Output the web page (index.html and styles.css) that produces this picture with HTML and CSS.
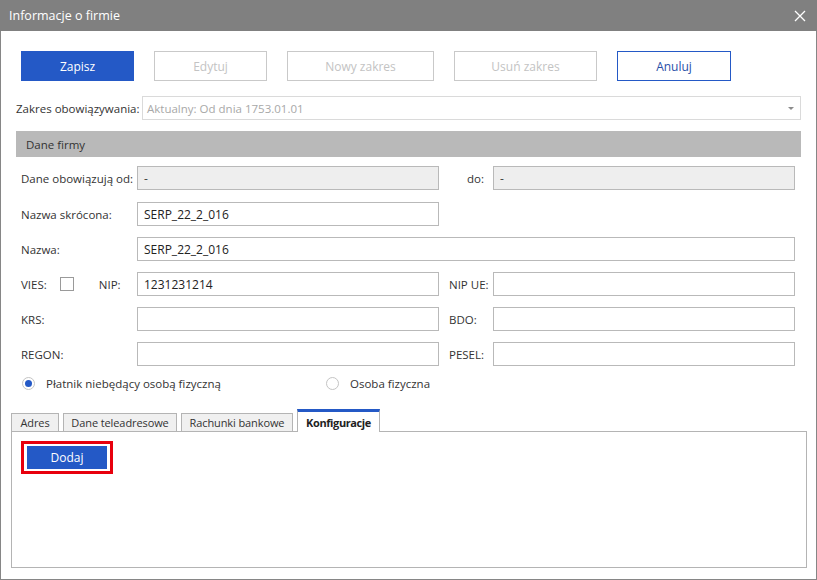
FILE: index.html
```html
<!DOCTYPE html>
<html lang="pl">
<head>
<meta charset="utf-8">
<title>Informacje o firmie</title>
<link rel="stylesheet" href="styles.css">
</head>
<body>
<div class="window">
  <div class="titlebar">
    <span class="title">Informacje o firmie</span>
    <svg class="close" width="12" height="12" viewBox="0 0 12 12"><path d="M1 1 L11 11 M11 1 L1 11" stroke="#fff" stroke-width="1.3" fill="none"/></svg>
  </div>

  <div class="toolbar">
    <div class="btn btn-primary btn-w113">Zapisz</div>
    <div class="btn btn-disabled btn-w113">Edytuj</div>
    <div class="btn btn-disabled btn-w147">Nowy zakres</div>
    <div class="btn btn-disabled btn-w143">Usuń zakres</div>
    <div class="btn btn-outline btn-w114">Anuluj</div>
  </div>

  <div class="range-row">
    <span class="range-label">Zakres obowiązywania:</span>
    <div class="select">
      <span class="select-value">Aktualny: Od dnia 1753.01.01</span>
      <span class="caret"></span>
    </div>
  </div>

  <div class="section-header">Dane firmy</div>

  <div class="form">
    <div class="row row-first">
      <span class="label">Dane obowiązują od:</span>
      <div class="input input-disabled">-</div>
      <span class="label label-do">do:</span>
      <div class="input input-disabled">-</div>
    </div>
    <div class="row">
      <span class="label">Nazwa skrócona:</span>
      <div class="input">SERP_22_2_016</div>
    </div>
    <div class="row">
      <span class="label">Nazwa:</span>
      <div class="input input-wide">SERP_22_2_016</div>
    </div>
    <div class="row">
      <span class="label label-vies">
        <span>VIES:</span>
        <span class="checkbox"></span>
        <span>NIP:</span>
      </span>
      <div class="input">1231231214</div>
      <span class="label label-right">NIP UE:</span>
      <div class="input"></div>
    </div>
    <div class="row">
      <span class="label">KRS:</span>
      <div class="input"></div>
      <span class="label label-right">BDO:</span>
      <div class="input"></div>
    </div>
    <div class="row">
      <span class="label">REGON:</span>
      <div class="input"></div>
      <span class="label label-right">PESEL:</span>
      <div class="input"></div>
    </div>
  </div>

  <div class="radios">
    <label class="radio-item radio-first"><span class="radio radio-checked"></span><span>Płatnik niebędący osobą fizyczną</span></label>
    <label class="radio-item"><span class="radio"></span><span>Osoba fizyczna</span></label>
  </div>

  <div class="tabs">
    <div class="tab tab-adres">Adres</div>
    <div class="tab tab-tele">Dane teleadresowe</div>
    <div class="tab tab-rach">Rachunki bankowe</div>
    <div class="tab tab-active tab-konf">Konfiguracje</div>
  </div>
  <div class="tab-panel">
    <div class="highlight">
      <div class="btn-add">Dodaj</div>
    </div>
  </div>
</div>
</body>
</html>
```

FILE: styles.css
```css
* { box-sizing: border-box; }

html, body {
  margin: 0;
  padding: 0;
  background: #ffffff;
}

body {
  font-family: "Open Sans", "Noto Sans", "Liberation Sans", sans-serif;
  font-size: 11.5px;
  color: #333333;
}

.window {
  width: 817px;
  height: 580px;
  border: 1px solid #868686;
  border-top: none;
  display: flex;
  flex-direction: column;
  background: #ffffff;
}

.titlebar {
  height: 31px;
  margin: 0 -1px;
  background: #808080;
  display: flex;
  align-items: center;
  justify-content: space-between;
  padding: 0 11px 0 9px;
  flex-shrink: 0;
}

.title {
  color: #ffffff;
  font-size: 12.5px;
}

.close {
  display: block;
}

/* Toolbar */
.toolbar {
  display: flex;
  gap: 20px;
  margin-top: 20px;
  padding-left: 20px;
}

.btn {
  height: 30px;
  display: flex;
  align-items: center;
  justify-content: center;
  font-size: 12px;
  border: 1px solid #c9c9c9;
  background: #ffffff;
}

.btn-w113 { width: 113px; }
.btn-w114 { width: 114px; }
.btn-w143 { width: 143px; }
.btn-w147 { width: 147px; }

.btn-primary {
  background: #2459c6;
  border-color: #2459c6;
  color: #ffffff;
}

.btn-disabled {
  color: #c3c3c3;
}

.btn-outline {
  border-color: #2459c6;
  color: #2a4fa8;
}

/* Range row */
.range-row {
  display: flex;
  align-items: center;
  margin-top: 15px;
  padding-left: 15px;
}

.range-label {
  width: 126px;
  color: #333333;
}

.select {
  width: 659px;
  height: 24px;
  border: 1px solid #dadada;
  display: flex;
  align-items: center;
  justify-content: space-between;
  padding: 0 5px 0 4px;
}

.select-value {
  color: #a8a8a8;
}

.caret {
  width: 0;
  height: 0;
  border-left: 3.5px solid transparent;
  border-right: 3.5px solid transparent;
  border-top: 3.5px solid #8c8c8c;
  margin-right: 1px;
}

/* Section header */
.section-header {
  margin-top: 11px;
  margin-left: 15px;
  width: 785px;
  height: 26px;
  background: #b9b9b9;
  display: flex;
  align-items: center;
  padding-left: 10px;
  color: #333333;
}

/* Form */
.form {
  margin-top: 9px;
  padding-left: 20px;
  display: flex;
  flex-direction: column;
  gap: 11px;
}

.row {
  display: grid;
  grid-template-columns: 116px 302px 54px 302px;
  height: 24px;
  align-items: center;
}

.row-first {
  margin-bottom: 1px;
}

.label {
  color: #333333;
  white-space: nowrap;
}

.label-right {
  padding-left: 10px;
}

.label-do {
  padding-left: 28px;
}

.label-vies {
  display: flex;
  align-items: center;
}

.checkbox {
  width: 14px;
  height: 14px;
  border: 1px solid #9a9a9a;
  background: #ffffff;
  margin-left: 13px;
  margin-right: 25px;
  display: inline-block;
}

.input {
  height: 24px;
  border: 1px solid #b9b9b9;
  background: #ffffff;
  display: flex;
  align-items: center;
  padding-left: 6px;
  color: #222222;
  font-size: 12px;
}

.input-disabled {
  background: #eeeeee;
  color: #444444;
}

.input-wide {
  grid-column: 2 / 5;
}

/* Radios */
.radios {
  display: flex;
  align-items: center;
  margin-top: 8px;
  padding-left: 21px;
  height: 18px;
}

.radio-item {
  display: flex;
  align-items: center;
  gap: 11px;
  color: #333333;
}

.radio-first {
  width: 304px;
}

.radio {
  width: 13px;
  height: 13px;
  border-radius: 50%;
  border: 1px solid #c4c4c4;
  background: #ffffff;
  display: flex;
  align-items: center;
  justify-content: center;
}

.radio-checked::after {
  content: "";
  width: 7px;
  height: 7px;
  border-radius: 50%;
  background: #2459c6;
}

/* Tabs */
.tabs {
  display: flex;
  align-items: flex-end;
  gap: 4px;
  margin-top: 17px;
  margin-left: 10px;
  height: 22px;
}

.tab {
  flex: 0 0 auto;
  min-width: 0;
  overflow: hidden;
  white-space: nowrap;
  height: 18px;
  border: 1px solid #b4b4b4;
  border-bottom: none;
  background: #f0f0f0;
  display: flex;
  align-items: center;
  justify-content: center;
  color: #333333;
  font-size: 11px;
  letter-spacing: -0.1px;
}

.tab-adres { width: 48px; }
.tab-tele { width: 114px; }
.tab-rach { width: 112px; }
.tab-konf { width: 83px; }

.tab-active {
  height: 23px;
  margin-bottom: -1px;
  background: #ffffff;
  border-top: 3px solid #2459c6;
  font-weight: 700;
  color: #222222;
  position: relative;
  z-index: 1;
  letter-spacing: -0.4px;
}

.tab-panel {
  margin-left: 10px;
  width: 796px;
  flex: 1;
  margin-bottom: 11px;
  border: 1px solid #b4b4b4;
  padding: 9px 0 0 9px;
}

.highlight {
  display: inline-flex;
  border: 3px solid #e8000d;
  padding: 2px 3px;
}

.btn-add {
  width: 80px;
  height: 23px;
  background: #2459c6;
  color: #ffffff;
  display: flex;
  align-items: center;
  justify-content: center;
  font-size: 12px;
}
```
